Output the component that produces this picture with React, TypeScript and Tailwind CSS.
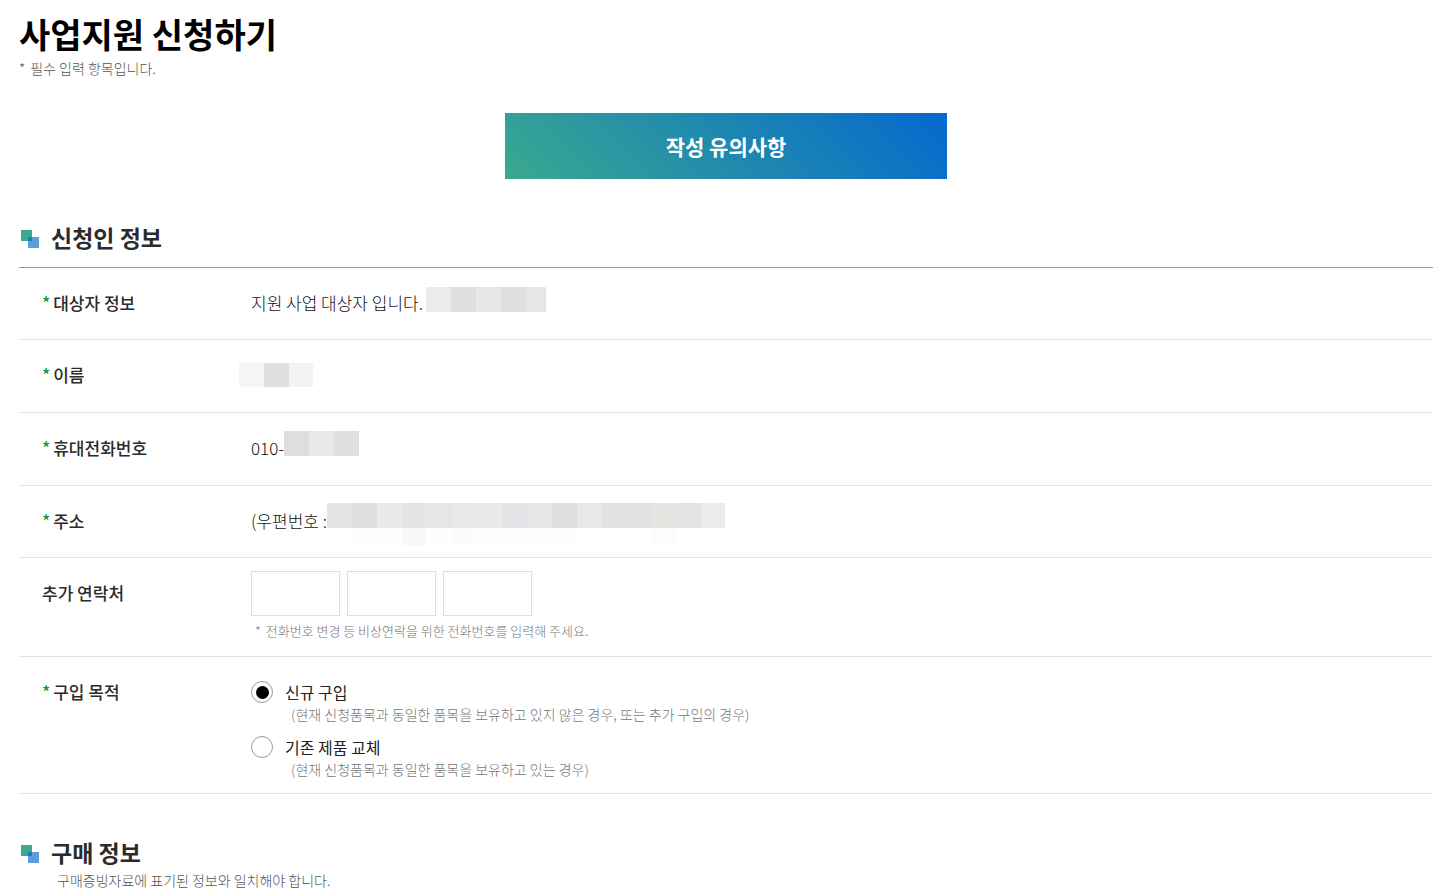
import type { ReactNode } from 'react';

function SectionMark() {
  return (
    <svg className="mt-[3px] h-[18px] w-[18px] shrink-0" viewBox="0 0 18 18" aria-hidden="true">
      <rect x="0" y="0" width="11" height="11" fill="#3ba88f" />
      <rect x="7" y="7" width="11" height="11" fill="#0468cf" fillOpacity="0.65" />
    </svg>
  );
}

function SectionTitle({ children }: { children: ReactNode }) {
  return (
    <h2 className="flex items-center gap-3 pl-0.5 text-[23px] leading-8 font-bold text-[#2b2b2b]">
      <SectionMark />
      {children}
    </h2>
  );
}

function Row({
  label,
  required = false,
  className,
  children,
}: {
  label: string;
  required?: boolean;
  className: string;
  children: ReactNode;
}) {
  return (
    <div className={`flex border-b border-[#e3e3e3] ${className}`} role="group" aria-label={label}>
      <div className="flex w-[232px] shrink-0 gap-[3px] pt-[23px] pl-[23px] text-[17px] leading-6 font-medium text-[#2b2b2b]">
        {required && <span className="text-[#0b9444]">*</span>}
        <span>{label}</span>
      </div>
      <div className="flex min-w-0 flex-1 items-start text-[#111]">{children}</div>
    </div>
  );
}

function Text({ children }: { children: ReactNode }) {
  return (
    <span className="shrink-0 pt-[23px] text-[17px] leading-6 font-light whitespace-nowrap">{children}</span>
  );
}

function Mask({ colors, className }: { colors: string[]; className: string }) {
  return (
    <div className={`flex overflow-hidden ${className}`} aria-hidden="true">
      {colors.map((color, i) => (
        <span key={i} className="w-[25px] shrink-0" style={{ backgroundColor: color }} />
      ))}
    </div>
  );
}

function Option({ label, hint, checked = false }: { label: string; hint: string; checked?: boolean }) {
  return (
    <div>
      <label className="flex h-6 items-center gap-3 text-[16px] leading-6 text-[#222]">
        <input
          type="radio"
          name="purpose"
          defaultChecked={checked}
          className="grid h-[22px] w-[22px] shrink-0 appearance-none place-items-center rounded-full border border-[#999] bg-white before:h-[13px] before:w-[13px] before:rounded-full checked:before:bg-black"
        />
        {label}
      </label>
      <p className="pb-0.5 pl-10 text-[14px] leading-5 font-light text-[#777]">{hint}</p>
    </div>
  );
}

const addressTop = [
  '#e5e5e5', '#dedede', '#e9ebea', '#e4e4e4', '#e6e6e6', '#e8e8e8', '#e9e9e7', '#e4e5e8',
  '#e6e6e6', '#dedee0', '#e7e9e8', '#e1e1e1', '#e1e1e1', '#e5e5e2', '#e3e3e3', '#ebeded',
];
const addressBottom = [
  '#ffffff', '#fdfefe', '#fdfdfd', '#f8f8f8', '#fefefe', '#fbfbfb', '#fdfdfd', '#fcfcfc',
  '#fefefe', '#fdfdfd', '#ffffff', '#ffffff', '#ffffff', '#fcfcfc', '#ffffff', '#ffffff',
];

export default function App() {
  return (
    <main className="min-h-screen bg-white pt-3.5 pr-[9px] pl-[19px] font-['Noto_Sans_CJK_KR','Noto_Sans',sans-serif]">
      <h1 className="text-[34px] leading-10 font-bold text-black">사업지원 신청하기</h1>
      <p className="mt-1 flex gap-[5px] text-[14px] leading-5 font-light text-[#555]">
        <span>*</span>
        <span>필수 입력 항목입니다.</span>
      </p>

      <button
        type="button"
        className="mx-auto mt-[35px] block h-[66px] w-full max-w-[442px] bg-[linear-gradient(45deg,#3aa98f,#0468cf)] text-[21px] leading-8 font-bold text-white"
      >
        작성 유의사항
      </button>

      <form className="mt-[42px]">
        <SectionTitle>신청인 정보</SectionTitle>
        <div className="mt-3.5 border-t border-[#999]">
          <Row label="대상자 정보" required className="min-h-[72px]">
            <Text>지원 사업 대상자 입니다.</Text>
            <Mask
              className="mt-[19px] ml-[3px] h-[25px] w-[120px]"
              colors={['#ebebeb', '#dfdfdf', '#e8e7e5', '#dfdfdf', '#e5e6e8']}
            />
          </Row>
          <Row label="이름" required className="min-h-[73px]">
            <Mask className="mt-[23px] -ml-3 h-6 w-[74px]" colors={['#f5f5f5', '#dfdedc', '#f1f2f4']} />
          </Row>
          <Row label="휴대전화번호" required className="min-h-[73px]">
            <Text>010-</Text>
            <Mask className="mt-[18px] h-[25px] w-[75px]" colors={['#dededc', '#e9e9e7', '#dee0df']} />
          </Row>
          <Row label="주소" required className="min-h-[72px]">
            <Text>(우편번호 :</Text>
            <div className="mt-[17px]">
              <Mask className="h-[25px] w-[398px]" colors={addressTop} />
              <Mask className="h-[17px] w-[398px]" colors={addressBottom} />
            </div>
          </Row>
          <Row label="추가 연락처" className="pb-[15px]">
            <div className="pt-[13px]">
              <div className="flex gap-[7px]">
                {['첫째 자리', '가운데 자리', '끝자리'].map((part) => (
                  <input
                    key={part}
                    type="tel"
                    aria-label={`추가 연락처 ${part}`}
                    className="h-[45px] w-[89px] border border-[#ddd] bg-white px-3 text-[16px]"
                  />
                ))}
              </div>
              <p className="mt-[5px] flex gap-[5px] pl-1 text-[13px] leading-5 font-light text-[#777]">
                <span>*</span>
                <span>전화번호 변경 등 비상연락을 위한 전화번호를 입력해 주세요.</span>
              </p>
            </div>
          </Row>
          <Row label="구입 목적" required className="pb-3">
            <div className="flex flex-col gap-[9px] pt-[23px]">
              <Option
                checked
                label="신규 구입"
                hint="(현재 신청품목과 동일한 품목을 보유하고 있지 않은 경우, 또는 추가 구입의 경우)"
              />
              <Option label="기존 제품 교체" hint="(현재 신청품목과 동일한 품목을 보유하고 있는 경우)" />
            </div>
          </Row>
        </div>

        <div className="mt-[42px]">
          <SectionTitle>구매 정보</SectionTitle>
          <p className="mt-0.5 pl-[38px] text-[14px] leading-5 font-light text-[#555]">
            구매증빙자료에 표기된 정보와 일치해야 합니다.
          </p>
        </div>
      </form>
    </main>
  );
}
